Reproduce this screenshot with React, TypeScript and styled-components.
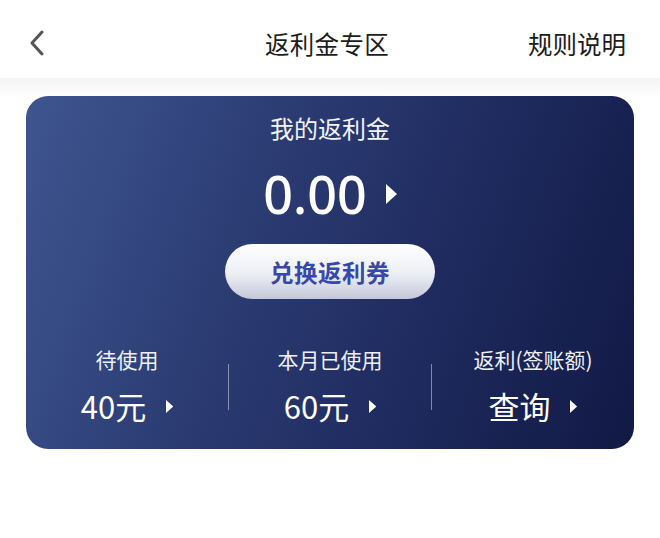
import React from 'react';
import styled, { createGlobalStyle } from 'styled-components';

const GlobalStyle = createGlobalStyle`
  html, body {
    margin: 0;
    padding: 0;
    background: #fff;
  }
  body {
    font-family: "Noto Sans CJK SC", "Noto Sans", sans-serif;
  }
`;

// 헤더
const Header = styled.div`
  height: 78px;
  box-sizing: border-box;
  padding: 8px 34px 0 28px;
  display: grid;
  grid-template-columns: 1fr auto 1fr;
  align-items: center;
  background: #fff;
`;
const BackBtn = styled.div`
  display: flex;
  align-items: center;
`;
const Title = styled.div`
  font-size: 24.5px;
  color: #1c1c1c;
  letter-spacing: 0.3px;
`;
const RuleLink = styled.div`
  justify-self: end;
  font-size: 24.5px;
  color: #1c1c1c;
`;

// 본문
const Body = styled.div`
  min-height: 460px;
  padding: 18px 26px 0 26px;
  background: linear-gradient(180deg, #f4f4f4 0px, #f9f9f9 10px, #ffffff 20px);
`;
const Card = styled.div`
  height: 353px;
  border-radius: 22px;
  background: linear-gradient(110deg, #3f5590 0%, #2c3d74 35%, #1f2b5f 65%, #111944 100%);
  color: #fff;
  display: flex;
  flex-direction: column;
  align-items: center;
  padding-top: 16px;
  box-sizing: border-box;
`;
const CardLabel = styled.div`
  font-size: 24px;
  line-height: 32px;
  color: #f2f4fa;
`;
const AmountRow = styled.div`
  display: flex;
  align-items: center;
  gap: 19px;
  margin-top: 20px;
`;
const Amount = styled.div`
  font-family: "Noto Sans", "Open Sans", sans-serif;
  font-size: 52px;
  line-height: 60px;
  font-weight: 500;
`;
const ExchangeBtn = styled.div`
  margin-top: 20px;
  width: 210px;
  height: 55px;
  border-radius: 28px;
  background: linear-gradient(180deg, #ffffff 0%, #eceef5 55%, #c4c7d8 100%);
  display: flex;
  align-items: center;
  justify-content: center;
  font-size: 23.5px;
  font-weight: 700;
  color: #3747ab;
  letter-spacing: 0.5px;
`;
const Stats = styled.div`
  margin-top: 46px;
  width: 100%;
  display: grid;
  grid-template-columns: 1fr auto 1fr auto 1fr;
  align-items: center;
`;
const StatCol = styled.div`
  display: flex;
  flex-direction: column;
  align-items: center;
`;
const StatLabel = styled.div`
  font-size: 21px;
  line-height: 28px;
  color: #eef0f7;
`;
const StatValue = styled.div`
  display: flex;
  align-items: center;
  gap: 20px;
  margin-top: 14px;
  font-size: 31px;
  line-height: 38px;
`;
const Divider = styled.div`
  width: 1px;
  height: 46px;
  margin-top: 4px;
  background: rgba(255, 255, 255, 0.45);
`;

const Arrow = ({ size }: { size: number }) => (
  <svg width={size * 0.55} height={size} viewBox="0 0 5.5 10">
    <polygon points="0,0 5.5,5 0,10" fill="#fff" />
  </svg>
);

export default function App(): JSX.Element {
  const stats = [
    { label: '待使用', value: '40元' },
    { label: '本月已使用', value: '60元' },
    { label: '返利(签账额)', value: '查询' },
  ];

  return (
    <>
      <GlobalStyle />
      <Header>
        <BackBtn>
          <svg width="18" height="26" viewBox="0 0 18 26">
            <polyline points="14,2 4,13 14,24" fill="none" stroke="#555" strokeWidth="3" strokeLinecap="round" strokeLinejoin="round" />
          </svg>
        </BackBtn>
        <Title>返利金专区</Title>
        <RuleLink>规则说明</RuleLink>
      </Header>
      <Body>
        <Card>
          <CardLabel>我的返利金</CardLabel>
          <AmountRow>
            <Amount>0.00</Amount>
            <Arrow size={20} />
          </AmountRow>
          <ExchangeBtn>兑换返利券</ExchangeBtn>
          <Stats>
            {stats.map((s, i) => (
              <React.Fragment key={s.label}>
                {i > 0 && <Divider />}
                <StatCol>
                  <StatLabel>{s.label}</StatLabel>
                  <StatValue>
                    {s.value}
                    <Arrow size={13} />
                  </StatValue>
                </StatCol>
              </React.Fragment>
            ))}
          </Stats>
        </Card>
      </Body>
    </>
  );
}
